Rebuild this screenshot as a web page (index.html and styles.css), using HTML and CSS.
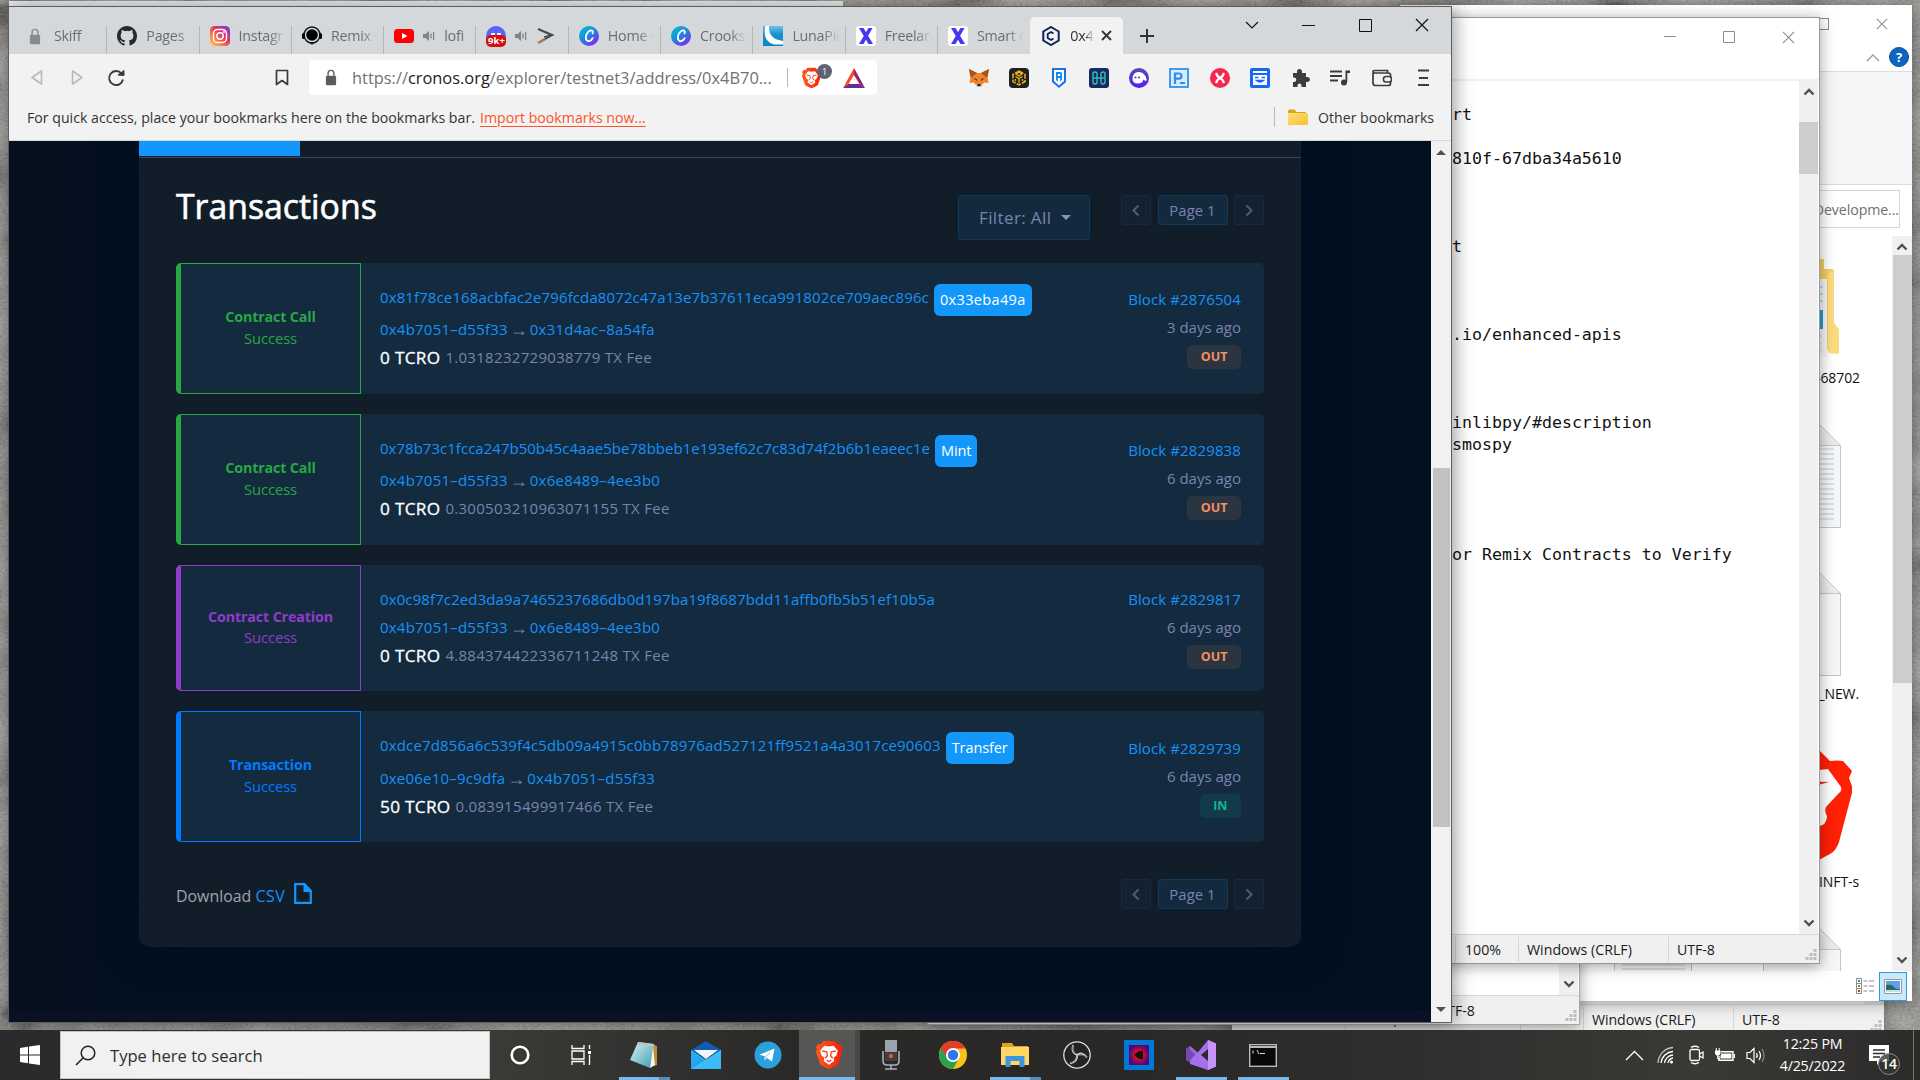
FILE: index.html
```html
<!DOCTYPE html>
<html lang="en">
<head>
<meta charset="utf-8">
<title>Desktop</title>
<link rel="stylesheet" href="styles.css">
</head>
<body>
<svg class="defs" width="0" height="0">
  <defs>
    <linearGradient id="g-insta" x1="0" y1="1" x2="1" y2="0"><stop offset="0" stop-color="#fd5"/><stop offset=".3" stop-color="#ff7a3c"/><stop offset=".6" stop-color="#e1306c"/><stop offset="1" stop-color="#6a3be0"/></linearGradient>
    <linearGradient id="g-canva" x1="0" y1="0" x2=".7" y2="1"><stop offset="0" stop-color="#00c4cc"/><stop offset=".5" stop-color="#1a8fe0"/><stop offset="1" stop-color="#7d2ae8"/></linearGradient>
    <linearGradient id="g-luna" x1="0" y1="0" x2="0" y2="1"><stop offset="0" stop-color="#6cc3e8"/><stop offset=".4" stop-color="#1c93cc"/><stop offset="1" stop-color="#0a86c4"/></linearGradient>
    <linearGradient id="g-brave" x1="0" y1="0" x2="1" y2="0"><stop offset="0" stop-color="#ff5a1f"/><stop offset="1" stop-color="#fb1e08"/></linearGradient>
    <linearGradient id="g-folder" x1="0" y1="0" x2="1" y2="1"><stop offset="0" stop-color="#ffe07a"/><stop offset="1" stop-color="#f6c02e"/></linearGradient>
    <linearGradient id="g-mail" x1="0" y1="0" x2="1" y2="1"><stop offset="0" stop-color="#2ab4f4"/><stop offset="1" stop-color="#1a8fe8"/></linearGradient>
    <linearGradient id="g-np" x1="0" y1="0" x2="1" y2="1"><stop offset="0" stop-color="#d8f3f6"/><stop offset="1" stop-color="#3f9db0"/></linearGradient>
    <radialGradient id="g-red"><stop offset="0" stop-color="#ff2a10"/><stop offset=".55" stop-color="#c00838"/><stop offset="1" stop-color="#4c0a78"/></radialGradient>
    <linearGradient id="g-phantom" x1="0" y1="0" x2="0" y2="1"><stop offset="0" stop-color="#534bb1"/><stop offset="1" stop-color="#551bf9"/></linearGradient>
    <linearGradient id="g-fold" x1="0" y1="1" x2="1" y2="0"><stop offset="0" stop-color="#e4e4e4"/><stop offset="1" stop-color="#fafafa"/></linearGradient>
    <filter id="stone" x="0" y="0" width="100%" height="100%"><feTurbulence type="fractalNoise" baseFrequency=".35 .5" numOctaves="3" seed="4"/><feColorMatrix values=".9 0 0 0 0  .9 0 0 0 0  .9 0 0 0 0  0 0 0 0 1"/></filter>
    <filter id="stone-big" x="0" y="0" width="100%" height="100%"><feTurbulence type="fractalNoise" baseFrequency=".012 .02" numOctaves="3" seed="9"/><feColorMatrix values="2 0 0 0 -.5  2 0 0 0 -.5  2 0 0 0 -.5  0 0 0 0 1"/></filter>
    <symbol id="lock" viewBox="0 0 14 20"><rect x="1" y="8" width="12" height="11" rx="1.5" fill="currentColor"/><path d="M3.6 8V5a3.4 3.4 0 0 1 6.8 0v3" fill="none" stroke="currentColor" stroke-width="1.7"/></symbol>
    <symbol id="sound" viewBox="0 0 14 14"><path d="M1 5h2.6L7 2v10L3.6 9H1z" fill="currentColor"/><path d="M9 4.5v5M11.6 3v8" stroke="currentColor" stroke-width="1.3"/></symbol>
    <symbol id="canva" viewBox="0 0 20 20"><circle cx="10" cy="10" r="10" fill="url(#g-canva)"/><path d="M13.6 7.400c1-3-1.700-3.800-3.800-2C6.900 7.700 6 12 7.700 14.300c1.500 1.900 4.500.6 6-2.200" fill="none" stroke="#fff" stroke-width="1.800" stroke-linecap="round"/></symbol>
    <symbol id="xicon" viewBox="0 0 20 20"><rect width="20" height="20" rx="3" fill="#fff"/><path d="M3 2h4.500L17 18h-4.500zM12.500 2h4L7.500 18h-4.500z" fill="#4338f0"/></symbol>
    <symbol id="lion" viewBox="0 0 28 30"><path d="M8 0h12l3 3.500 2.500-.5L28 6.500l-1 2 1 3.500-4.500 13q-1 2-9.500 5-8.500-3-9.500-5L0 12l1-3.500-1-2L2.500 3 5 3.500z" fill="url(#g-brave)"/><path d="M9 5l5 .8 5-.8 4.500 5.500-1.500 5-3 2.500.7 3.500-5.700 4-5.700-4L9 18l-3-2.500-1.500-5z" fill="#fff"/><path d="M6.500 10.500l5 1 .8 4-2.300 3M21.500 10.500l-5 1-.8 4 2.300 3M11.500 20.500l2.500 1.500 2.500-1.500" fill="none" stroke="#fb3a14" stroke-width="1.400"/></symbol>
    <symbol id="chev" viewBox="0 0 12 12"><path d="M1.500 3.500L6 8l4.500-4.500" fill="none" stroke="currentColor" stroke-width="2.400"/></symbol>
    <symbol id="close" viewBox="0 0 14 14"><path d="M1 1l12 12M13 1L1 13" stroke="currentColor" stroke-width="1.200"/></symbol>
    <symbol id="doc" viewBox="0 0 78 105"><path d="M.5.500h55l22 22v82H.5z" fill="#f5f6f8" stroke="#c3c5c8"/><path d="M55.500.500v22h22z" fill="url(#g-fold)" stroke="#c3c5c8"/></symbol>
    <symbol id="grip" viewBox="0 0 12 12"><path d="M8.500 0h3v3h-3zM4.500 4h3v3h-3zM8.500 4h3v3h-3zM.5 8h3v3h-3zM4.500 8h3v3h-3zM8.500 8h3v3h-3z" fill="#bdbdbd"/></symbol>
  </defs>
</svg>

<main class="desktop">
  <svg class="wallpaper" width="1920" height="1080"><rect width="1920" height="1080" filter="url(#stone-big)" opacity=".35"/><rect width="1920" height="1080" filter="url(#stone)" opacity=".28"/></svg>

  <!-- Rearmost notepad -->
  <section class="window np-back">
    <div class="np-back-top"></div>
    <div class="status">
      <span class="cell c1">Ln 47, Col 1</span><span class="cell c2">100%</span><span class="cell c3">Windows (CRLF)</span><span class="cell c4">UTF-8</span>
      <svg class="grip"><use href="#grip"/></svg>
    </div>
  </section>

  <!-- File explorer -->
  <section class="window explorer">
    <header class="ex-title">
      <span class="ctl-box"></span>
      <svg class="ctl-x" viewBox="0 0 14 14"><use href="#close"/></svg>
    </header>
    <div class="ex-tabs">
      <svg width="14" height="9" viewBox="0 0 14 9"><path d="M1 8l6-6 6 6" fill="none" stroke="#9a9a9a" stroke-width="1.300"/></svg>
      <span class="help">?</span>
    </div>
    <div class="ex-ribbon"></div>
    <div class="ex-search"><span>Search Developme...</span></div>
    <div class="ex-body">
      <div class="ex-files">
        <svg class="f-folder" width="60" height="98" viewBox="0 0 60 98"><path d="M0 0h16v10h8q2 0 2 3v78H0z" fill="#f3cf66"/><path d="M0 20h19v78l-19-3z" fill="#f4f6f8"/><path d="M2 28h13M2 35h13M2 42h13" stroke="#7dc0e6"/><path d="M0 51h15v19H0z" fill="#2f94cf"/><path d="M2 77h12M2 84h12M2 91h12" stroke="#cfd4d8"/><path d="M20 14l6-2v52l5 6v25l-11-1z" fill="#fddc80"/></svg>
        <span class="f-name n1">1650468702</span>
        <svg class="f-doc d1" width="78" height="105"><use href="#doc"/><path d="M8 26h63M8 31h63M8 36h63M8 41h63M8 46h63M8 51h63M8 56h63M8 61h63M8 66h63M8 71h63M8 76h63M8 81h63M8 86h63M8 91h63M8 96h63" stroke="#c2c5c8"/></svg>
        <svg class="f-doc d2" width="78" height="105"><use href="#doc"/></svg>
        <span class="f-name n2">README_NEW.</span>
        <svg class="f-brave" width="100" height="110" viewBox="0 0 100 110"><path d="M50 0h17l11 11q8-1 13 0l9 10-3 7 4 11-14 53q-3 9-9 12l-13 7H40z" fill="#ff2104"/><path d="M50 22l26-3 13 18q1 4-2 6L74 57q-2 4 1 9 0 10-10 10H50z" fill="#fff"/><path d="M50 31l27 1-22 6z" fill="#ff2104"/></svg>
        <span class="f-name n3">INFT-s</span>
        <svg class="f-doc d3" width="78" height="105"><use href="#doc"/></svg>
        <svg class="f-doc d4" width="78" height="105"><use href="#doc"/><path d="M8 38h63M8 42h63" stroke="#c2c5c8"/></svg>
      </div>
      <div class="ex-scroll">
        <svg width="12" height="12" class="up"><use href="#chev"/></svg>
        <div class="ex-thumb"></div>
        <svg width="12" height="12"><use href="#chev"/></svg>
      </div>
    </div>
    <footer class="ex-foot">
      <svg width="18" height="17" viewBox="0 0 18 17"><path d="M.5.500h5v5h-5zM.5 5.500h5v5h-5zM.5 10.500h5v5h-5z" fill="#fff" stroke="#8d8d8d"/><path d="M7.500 3h4M13 3h5M7.500 8h4M13 8h5M7.500 13h4M13 13h5" stroke="#8d8d8d"/><path d="M2 2h2v2H2z" fill="#3a8f8a"/><path d="M2 7h2v2H2z" fill="#a0803a"/><path d="M2 12h2v2H2z" fill="#c0391a"/></svg>
      <span class="view-sel"><svg width="18" height="15" viewBox="0 0 18 15"><path d="M.5.500h17v14H.5z" fill="#fff" stroke="#8d9aa3"/><path d="M2 2h14v11H2z" fill="#5f9ee8"/><path d="M2 6q6-1 8 2t6 2v3H2z" fill="#2f6b50"/><path d="M2 11h14v2H2z" fill="#bfe0f4"/></svg></span>
    </footer>
  </section>

  <!-- Middle notepad -->
  <section class="window np-mid">
    <div class="np-mid-body"><div class="track"><svg width="12" height="12"><use href="#chev"/></svg></div></div>
    <div class="status">
      <span class="enc">UTF-8</span>
      <svg class="grip"><use href="#grip"/></svg>
    </div>
  </section>

  <!-- Front notepad -->
  <section class="window np-front">
    <header class="np-title">
      <svg width="12" height="12"><path d="M0 5.500h12" stroke="#8c8c8c"/></svg>
      <svg width="12" height="12"><path d="M.5.500h11v11H.5z" fill="none" stroke="#8c8c8c"/></svg>
      <svg width="13" height="13" class="grey" viewBox="0 0 14 14"><use href="#close"/></svg>
    </header>
    <div class="np-main">
      <pre class="np-text">rt

810f-67dba34a5610



t



.io/enhanced-apis



inlibpy/#description
smospy




or Remix Contracts to Verify</pre>
      <div class="np-scroll">
        <svg width="12" height="12" class="up"><use href="#chev"/></svg>
        <div class="np-thumb"></div>
        <svg width="12" height="12"><use href="#chev"/></svg>
      </div>
    </div>
    <div class="status">
      <span class="cell c2">100%</span><span class="cell c3">Windows (CRLF)</span><span class="cell c4">UTF-8</span>
      <svg class="grip"><use href="#grip"/></svg>
    </div>
  </section>

  <div class="sliver"></div>

  <!-- Browser -->
  <section class="window browser">
    <header class="tabstrip">
      <div class="tab"><svg class="fav dim" viewBox="0 0 20 20"><use href="#lock" x="4" y="2" width="12" height="17"/></svg><span class="t">Skiff</span></div>
      <div class="tab"><svg class="fav" viewBox="0 0 16 16"><path fill="#24292f" d="M8 0C3.580 0 0 3.580 0 8c0 3.540 2.290 6.530 5.470 7.590.4.070.55-.17.55-.38v-1.490c-2.010.37-2.530-.49-2.690-.94-.09-.23-.48-.94-.82-1.130-.28-.15-.68-.52-.01-.53.63-.01 1.080.58 1.230.82.72 1.210 1.870.87 2.330.66.07-.52.28-.87.51-1.070-1.780-.2-3.640-.89-3.640-3.950 0-.87.31-1.590.82-2.150-.08-.2-.36-1.020.08-2.120 0 0 .67-.21 2.200.82a7.400 7.400 0 0 1 4 0c1.530-1.040 2.200-.82 2.200-.82.44 1.100.16 1.920.08 2.120.51.56.82 1.270.82 2.150 0 3.070-1.870 3.750-3.650 3.950.29.25.54.73.54 1.480v2.190c0 .21.15.46.55.38A8.010 8.010 0 0 0 16 8c0-4.420-3.580-8-8-8z"/></svg><span class="t">Pages</span></div>
      <div class="tab"><svg class="fav" viewBox="0 0 20 20"><rect width="20" height="20" rx="4.500" fill="url(#g-insta)"/><rect x="3.500" y="3.500" width="13" height="13" rx="4" fill="none" stroke="#fff" stroke-width="1.500"/><circle cx="10" cy="10" r="3.200" fill="none" stroke="#fff" stroke-width="1.500"/><circle cx="14" cy="6" r="1" fill="#fff"/></svg><span class="t">Instagr</span></div>
      <div class="tab"><svg class="fav" viewBox="0 0 20 20"><circle cx="10" cy="9" r="8" fill="none" stroke="#111" stroke-width="1.500"/><circle cx="10" cy="9" r="5.800" fill="#000"/><rect x="0" y="7" width="3" height="6" rx="1.500"/><rect x="17" y="7" width="3" height="6" rx="1.500"/><path d="M7.500 16h5L10 19z"/></svg><span class="t">Remix -</span></div>
      <div class="tab"><svg class="fav" viewBox="0 0 20 20"><rect y="3" width="20" height="14" rx="3.500" fill="#f00"/><path d="M8 7l5.500 3L8 13z" fill="#fff"/></svg><svg class="snd"><use href="#sound"/></svg><span class="t plain">lofi</span></div>
      <div class="tab"><span class="fav discord"><i></i><b>9k+</b></span><svg class="snd"><use href="#sound"/></svg><svg class="dart" width="18" height="16" viewBox="0 0 18 16"><path d="M2 1l14 6L4 14" fill="none" stroke="#49474a" stroke-width="2"/><path d="M9 4l7 3-8 2" fill="none" stroke="#49474a" stroke-width="1.500"/><path d="M2 15l7-4" stroke="#a77a5c" stroke-width="2.500"/></svg></div>
      <div class="tab"><svg class="fav"><use href="#canva"/></svg><span class="t">Home -</span></div>
      <div class="tab"><svg class="fav"><use href="#canva"/></svg><span class="t">Crooks</span></div>
      <div class="tab"><svg class="fav" viewBox="0 0 20 20"><rect width="20" height="20" fill="url(#g-luna)"/><path d="M6 0q-1 13 14 15v3.500H11Q-1 15 2.500 0z" fill="#fff"/></svg><span class="t">LunaPic</span></div>
      <div class="tab"><svg class="fav"><use href="#xicon"/></svg><span class="t">Freelan</span></div>
      <div class="tab last"><svg class="fav"><use href="#xicon"/></svg><span class="t">Smart c</span></div>
      <div class="tab active"><svg class="fav" viewBox="0 0 20 20"><path d="M10 1l7.700 4.500v9L10 19l-7.700-4.500v-9z" fill="none" stroke="#0b2457" stroke-width="2"/><path d="M12.500 7.500L10 6 6.700 8v4l3.300 2 2.500-1.500" fill="none" stroke="#0b2457" stroke-width="1.800"/></svg><span class="t">0x4</span><svg class="tx" width="11" height="11" viewBox="0 0 11 11"><path d="M1 1l9 9M10 1l-9 9" stroke="#333" stroke-width="1.900"/></svg></div>
      <svg class="plus" width="16" height="16"><path d="M8 1v14M1 8h14" stroke="#333" stroke-width="2"/></svg>
      <div class="winctl">
        <svg width="14" height="8"><path d="M1 1l6 6 6-6" fill="none" stroke="#111" stroke-width="1.200"/></svg>
        <svg width="13" height="13"><path d="M0 6.500h13" stroke="#111"/></svg>
        <svg width="13" height="13"><path d="M.5.500h12v12H.5z" fill="none" stroke="#111"/></svg>
        <svg width="14" height="14" viewBox="0 0 14 14"><use href="#close"/></svg>
      </div>
    </header>

    <nav class="toolbar">
      <svg class="nav-b" width="13" height="17"><path d="M11.500 2v13L2 8.500z" fill="none" stroke="#b9b9b9" stroke-width="1.600" stroke-linejoin="round"/></svg>
      <svg class="nav-f" width="13" height="17"><path d="M1.500 2v13L11 8.500z" fill="none" stroke="#b9b9b9" stroke-width="1.600" stroke-linejoin="round"/></svg>
      <svg class="nav-r" width="18" height="18"><path d="M14.500 4.500A7 7 0 1 0 16 10.500" fill="none" stroke="#3a3a3a" stroke-width="1.900"/><path d="M11 6l6 .5V1.500z" fill="#3a3a3a" stroke="#3a3a3a"/></svg>
      <svg class="nav-m" width="14" height="17"><path d="M1.500 1.500h11v14L7 11.500l-5.500 4z" fill="none" stroke="#3a3a3a" stroke-width="1.700" stroke-linejoin="round"/></svg>
      <div class="urlbox">
        <svg class="ulock" width="12" height="17"><use href="#lock"/></svg>
        <span class="url">https://<b>cronos.org</b>/explorer/testnet3/address/0x4B70...</span>
        <span class="usep"></span>
        <span class="shield"><svg width="19" height="22"><use href="#lion"/></svg><em>1</em></span>
        <svg width="22" height="20" viewBox="0 0 22 20"><path d="M11 0L0 20l5.500-4L11 7z" fill="#ff4724"/><path d="M11 0l11 20-5.500-4L11 7z" fill="#9e1f63"/><path d="M0 20h22l-5.500-4h-11z" fill="#662d91"/></svg>
      </div>
      <div class="exts">
        <svg viewBox="0 0 20 20"><path d="M0 1l8 4h4l8-4-1.500 8 1 6-4.500-.5-3 4h-4l-3-4-4.500.5 1-6z" fill="#f0832a"/><path d="M0 1l8 4-5 4-1.500 0zM20 1l-8 4 5 4 1.500 0z" fill="#a8521e"/><path d="M4 10l4 1v2zM16 10l-4 1v2z" fill="#3b3b46"/><path d="M7 16h6l-1 3H8z" fill="#c9c0bb"/><path d="M8.500 16h3v2h-3z" fill="#222"/></svg>
        <svg viewBox="0 0 20 20"><rect width="20" height="20" rx="4" fill="#1e2026"/><path d="M10 3l6 3.500v7L10 17l-6-3.500v-7z" fill="none" stroke="#f0b90b" stroke-width="1.500" stroke-dasharray="5 1.200"/><path d="M6.500 8.500L10 10.500l3.500-2M10 10.500V15M7 6l3-1.700L13 6l-3 2zM6.500 11v2M13.500 11v2" stroke="#f0b90b" stroke-width="1.300" fill="none"/></svg>
        <svg viewBox="0 0 20 20"><path d="M3 0h14v14l-7 6-7-6z" fill="#1273ea"/><path d="M5 2h10v11l-5 4.500L5 13z" fill="#fff"/><path d="M7 4h4.500q1.500 0 1.500 1.500v6L11.200 14V10H8.800v4L7 12z" fill="#1287f5"/><path d="M8.800 6h2.400v2H8.800z" fill="#fff"/></svg>
        <svg viewBox="0 0 20 20"><rect width="20" height="20" rx="3" fill="#1b295e"/><g fill="none" stroke="#2fc9c0" stroke-width="1.300"><rect x="4" y="4" width="4" height="12" rx="2"/><rect x="12" y="4" width="4" height="12" rx="2"/><path d="M4 10h12"/></g></svg>
        <svg viewBox="0 0 20 20"><circle cx="10" cy="10" r="10" fill="url(#g-phantom)"/><path d="M3.500 10.500q0-6 6-6.500 7 0 8.300 8.500-3 .5-3.500-1 0 4-6 4-4.800 0-4.800-5z" fill="#fff"/><circle cx="6.500" cy="9.500" r="1.100" fill="#534bb1"/><circle cx="10" cy="9.500" r="1.100" fill="#534bb1"/></svg>
        <svg viewBox="0 0 20 20"><rect x="1" y="1" width="18" height="18" fill="#dcecff" stroke="#3a9cf5" stroke-width="2"/><path d="M6 16V5.500h4q2.500 0 2.500 2.500T10 10.700H6" fill="none" stroke="#2f8df0" stroke-width="2.200"/><path d="M11 15h5" stroke="#2f8df0" stroke-width="2"/></svg>
        <svg viewBox="0 0 20 20"><circle cx="10" cy="10" r="10" fill="#f5274f"/><path d="M6 5q1.500 4 4 5t4 5M14 5q-1.500 4-4 5t-4 5" stroke="#fff" stroke-width="2.200" fill="none"/></svg>
        <svg viewBox="0 0 20 20"><rect width="20" height="20" rx="2" fill="#1769f5"/><path d="M3 3h14v2H3zM3 7h14v10H3z" fill="#fff"/><path d="M5 9.500h3.500M11.500 9.500H15M6.500 12.500q3.500 3 7 0z" stroke="#1769f5" stroke-width="1.400" fill="none"/></svg>
        <svg viewBox="0 0 20 20"><path d="M3 5h4V3.500a2.500 2.500 0 0 1 5 0V5h4v4h1.500a2.500 2.500 0 0 1 0 5H16v5h-4.500v-1.500a2 2 0 0 0-4 0V19H3v-5h1a2.300 2.300 0 0 0 0-4.600H3z" fill="#3c3c3c"/></svg>
        <svg viewBox="0 0 20 20"><path d="M0 3.500h12M0 8h12M0 12.500h8" stroke="#3c3c3c" stroke-width="1.800"/><path d="M15.500 14V2.500H20v2.500h-2.700V14z" fill="#3c3c3c"/><circle cx="14" cy="14.500" r="3" fill="#3c3c3c"/></svg>
        <svg viewBox="0 0 20 20"><path d="M1 5v10q0 2.500 2.500 2.500h13q2 0 2-2V7q0-2-2-2H3Q1 5 1 3.700T3 2.500h12.500V5" fill="none" stroke="#3c3c3c" stroke-width="1.700"/><rect x="11.500" y="8.500" width="8" height="5.500" rx="2.500" fill="#f2f2f2" stroke="#3c3c3c" stroke-width="1.600"/></svg>
        <svg viewBox="0 0 20 20"><path d="M4 2.500h11M5 10h9M4 17h11" stroke="#3c3c3c" stroke-width="1.900"/></svg>
      </div>
    </nav>

    <div class="bookmarks">
      <span class="bm-text">For quick access, place your bookmarks here on the bookmarks bar.</span>
      <a class="bm-link">Import bookmarks now...</a>
      <span class="bm-sep"></span>
      <svg width="20" height="17" viewBox="0 0 20 17"><path d="M0 2q0-1.500 1.500-1.500h5L8.500 3H18v13H0z" fill="#dba520"/><path d="M0 4h18.500q1.500 0 1.500 1.500v9q0 1.500-1.500 1.500h-17Q0 16 0 14.500z" fill="url(#g-folder)"/></svg>
      <span class="bm-other">Other bookmarks</span>
    </div>

    <div class="viewport">
      <div class="page">
        <article class="panel">
          <div class="panel-tabs"><span class="panel-tab"></span></div>
          <header class="tx-head">
            <h1>Transactions</h1>
            <div class="filter">Filter: All <i></i></div>
            <div class="pager"><span class="pg off"><svg width="8" height="13"><path d="M6.500 1.500l-5 5 5 5" fill="none" stroke="#525d68" stroke-width="2"/></svg></span><span class="pg cur">Page 1</span><span class="pg off"><svg width="8" height="13"><path d="M1.500 1.500l5 5-5 5" fill="none" stroke="#525d68" stroke-width="2"/></svg></span></div>
          </header>

          <div class="card call">
            <div class="kind"><b>Contract Call</b><span>Success</span></div>
            <div class="info">
              <p class="l1"><a class="loose">0x81f78ce168acbfac2e796fcda8072c47a13e7b37611eca991802ce709aec896c</a><mark class="raw">0x33eba49a</mark></p>
              <p class="route"><a>0x4b7051–d55f33</a><i class="arr">→</i><a>0x31d4ac–8a54fa</a></p>
              <p><strong>0 TCRO</strong><span>1.0318232729038779 TX Fee</span></p>
            </div>
            <div class="meta"><a>Block #2876504</a><span>3 days ago</span><em class="out">OUT</em></div>
          </div>
          <div class="card call">
            <div class="kind"><b>Contract Call</b><span>Success</span></div>
            <div class="info">
              <p class="l1"><a>0x78b73c1fcca247b50b45c4aae5be78bbeb1e193ef62c7c83d74f2b6b1eaeec1e</a><mark>Mint</mark></p>
              <p class="route"><a>0x4b7051–d55f33</a><i class="arr">→</i><a>0x6e8489–4ee3b0</a></p>
              <p><strong>0 TCRO</strong><span>0.300503210963071155 TX Fee</span></p>
            </div>
            <div class="meta"><a>Block #2829838</a><span>6 days ago</span><em class="out">OUT</em></div>
          </div>
          <div class="card creation">
            <div class="kind"><b>Contract Creation</b><span>Success</span></div>
            <div class="info">
              <p class="l1"><a class="loose">0x0c98f7c2ed3da9a7465237686db0d197ba19f8687bdd11affb0fb5b51ef10b5a</a></p>
              <p class="route"><a>0x4b7051–d55f33</a><i class="arr">→</i><a>0x6e8489–4ee3b0</a></p>
              <p><strong>0 TCRO</strong><span>4.884374422336711248 TX Fee</span></p>
            </div>
            <div class="meta"><a>Block #2829817</a><span>6 days ago</span><em class="out">OUT</em></div>
          </div>
          <div class="card transfer">
            <div class="kind"><b>Transaction</b><span>Success</span></div>
            <div class="info">
              <p class="l1"><a class="looser">0xdce7d856a6c539f4c5db09a4915c0bb78976ad527121ff9521a4a3017ce90603</a><mark>Transfer</mark></p>
              <p class="route"><a>0xe06e10–9c9dfa</a><i class="arr">→</i><a>0x4b7051–d55f33</a></p>
              <p><strong>50 TCRO</strong><span>0.083915499917466 TX Fee</span></p>
            </div>
            <div class="meta"><a>Block #2829739</a><span>6 days ago</span><em class="in">IN</em></div>
          </div>

          <footer class="tx-foot">
            <span class="dl">Download <a>CSV</a></span>
            <svg class="csv" width="18" height="21"><path d="M1.200 1.200h9.300L16.800 8v11.800H1.200z" fill="none" stroke="#1397fb" stroke-width="2.200"/><path d="M9.500 1h1.500l6.500 7v1h-8z" fill="#1397fb"/></svg>
            <div class="pager"><span class="pg off"><svg width="8" height="13"><path d="M6.500 1.500l-5 5 5 5" fill="none" stroke="#525d68" stroke-width="2"/></svg></span><span class="pg cur">Page 1</span><span class="pg off"><svg width="8" height="13"><path d="M1.500 1.500l5 5-5 5" fill="none" stroke="#525d68" stroke-width="2"/></svg></span></div>
          </footer>
        </article>
        <div class="page-end"></div>
      </div>
      <div class="vscroll"><i class="tri-up"></i><div class="vthumb"></div><i class="tri-down"></i></div>
    </div>
  </section>

  <!-- Taskbar -->
  <footer class="taskbar">
    <div class="start"><svg width="20" height="20" viewBox="0 0 20 20"><path d="M0 3l8-1.200V9.500H0zM9 1.600L20 0v9.500H9zM0 10.500h8v7.700L0 17zM9 10.500h11V20L9 18.400z" fill="#fff"/></svg></div>
    <div class="search"><svg width="21" height="21"><circle cx="13" cy="8" r="6.800" fill="none" stroke="#222" stroke-width="1.500"/><path d="M8 13L1 20" stroke="#222" stroke-width="1.600"/></svg><span>Type here to search</span></div>
    <div class="apps">
      <div class="app"><svg width="20" height="20"><circle cx="10" cy="10" r="8.300" fill="none" stroke="#fff" stroke-width="2.600"/></svg></div>
      <div class="app"><svg width="21" height="20" viewBox="0 0 21 20"><g fill="none" stroke="#fff" stroke-width="1.300"><path d="M1 0v3.500h12V0M1 20v-3.500h12V20M1 6h12v8H1zM18.500 0v4M18.500 10v10"/></g><rect x="17" y="6" width="3" height="3" fill="#fff"/></svg></div>
      <div class="app run more"><svg width="30" height="30" viewBox="0 0 30 30"><path d="M23 4l5 2v19l-7 2z" fill="#c58a34"/><path d="M9 2l16 2-4 24L1 20z" fill="url(#g-np)"/><path d="M9 2l16 2-.6 2.500L8 5z" fill="#bfc4c7"/><path d="M24 7l2 18-5 3z" fill="#f2f4f4"/></svg></div>
      <div class="app"><svg width="30" height="28" viewBox="0 0 30 28"><path d="M0 9L15 0l15 9v5H0z" fill="#0f5cb0"/><path d="M3 9h24l-12 9z" fill="#f2f5f8"/><path d="M0 9l15 9.500L30 9v19H0z" fill="url(#g-mail)"/><path d="M0 28L30 9v19z" fill="#45c6fb" opacity=".75"/></svg></div>
      <div class="app"><svg width="28" height="28" viewBox="0 0 28 28"><circle cx="14" cy="14" r="13.500" fill="#2ba0da"/><path d="M5.500 13.700L20.500 7.500l-2.500 13-5-3.500-2.500 2.300.3-4z" fill="#fff"/><path d="M10.800 15l7-5-5.300 6.500-1.800 2.500z" fill="#bcdff0"/></svg></div>
      <div class="app act"><svg width="26" height="30"><use href="#lion"/></svg></div>
      <div class="app"><svg width="18" height="30" viewBox="0 0 18 30"><path d="M3 0h12v20H3z" fill="#9aa3ad"/><path d="M3 12h12v9H3z" fill="#3b4048"/><path d="M1 11v10q0 4 4 4h8q4 0 4-4V11" fill="none" stroke="#a7b0ba" stroke-width="1.600"/><path d="M9 25v4M3 29h12" stroke="#a7b0ba" stroke-width="1.600"/><circle cx="9" cy="16" r="2.200" fill="#e8561a"/></svg></div>
      <div class="app"><svg width="28" height="28" viewBox="0 0 28 28"><circle cx="14" cy="14" r="14" fill="#fbc116"/><path d="M14 14L1.900 7A14 14 0 0 0 14 28l6-10.500z" fill="#2ba24c"/><path d="M14 14V7.500h12.400A14 14 0 0 0 1.900 7l6.400 10.500z" fill="#e33b2e"/><circle cx="14" cy="14" r="7" fill="#fff"/><circle cx="14" cy="14" r="5.200" fill="#2f76ea"/></svg></div>
      <div class="app run more"><svg width="28" height="24" viewBox="0 0 28 24"><path d="M1 0h10l2 3h14v4H1z" fill="#e2a21a"/><path d="M0 4h28v18H0z" fill="#ffd766"/><path d="M4.500 24V13h19v11h-5v-6h-9v6z" fill="#3b96de"/></svg></div>
      <div class="app"><svg width="28" height="28" viewBox="0 0 28 28"><circle cx="14" cy="14" r="13.200" fill="#222327" stroke="#dcdcdc" stroke-width="1.300"/><path d="M14 14q-6-2-4-10M14 14q5-4 10 2.500M14 14q1 7-7 8.500" fill="none" stroke="#cfcfcf" stroke-width="1.800"/><path d="M10 4.500q-1 5 2 8M23.500 16q-4-3-8-1.500M7.500 22q5-2 5.500-6" fill="none" stroke="#777" stroke-width="1.200"/></svg></div>
      <div class="app"><svg width="30" height="30" viewBox="0 0 30 30"><rect width="30" height="30" fill="#0078d7"/><rect x="5" y="5" width="20" height="20" fill="url(#g-red)"/><path d="M10 15l5-4h4v8h-4z" fill="#111"/></svg></div>
      <div class="app run"><svg width="30" height="30" viewBox="0 0 30 30"><path d="M0 9l4-3 18 15V30L2 21q-2-1-2-3z" fill="#9a6ad8"/><path d="M0 9l4-3v4l5 4.500L4 20v2.500L0 20z" fill="#7747b8"/><path d="M22 0l8 3.500v23L22 30 4 24v-2z" fill="#a670e8"/><path d="M22 0l8 3.500v23L22 30z" fill="#c893f8"/><path d="M22 9v12l-7-6z" fill="#2a2a2a"/></svg></div>
      <div class="app run"><svg width="28" height="23" viewBox="0 0 28 23"><rect x=".7" y=".7" width="26.600" height="21.600" fill="#080808" stroke="#b5b9bd" stroke-width="1.400"/><path d="M1 3h26" stroke="#b5b9bd" stroke-width="2"/><path d="M4 6.500v3M6 7.500v.1M6 9.500v.1M8 6l2 4M11 9.500h5" stroke="#ddd"/></svg></div>
    </div>
    <div class="tray">
      <svg width="19" height="11"><path d="M1 10l8.500-8.500L18 10" fill="none" stroke="#fff" stroke-width="1.300"/></svg>
      <svg width="17" height="18" viewBox="0 0 17 18"><g fill="none" stroke="#fff" stroke-width="1.300"><path d="M1 17A16 16 0 0 1 16 1.500" opacity=".7"/><path d="M4 17A13 13 0 0 1 16 5.500"/><path d="M7.500 17A9.500 9.500 0 0 1 16 9"/><path d="M11 17a6 6 0 0 1 5-5"/></g><circle cx="14.500" cy="16" r="1.500" fill="#fff"/></svg>
      <svg width="15" height="20" viewBox="0 0 15 20"><g fill="none" stroke="#fff" stroke-width="1.300"><rect x="1" y="4.500" width="9.500" height="11" rx="1.500"/><path d="M10.500 9l3.500-2v6l-3.500-2M2 2.500q4-2.500 8 0M2 17.500q4 2.500 8 0"/></g></svg>
      <svg width="20" height="14" viewBox="0 0 20 14"><path d="M6 3.700h12v8.600H4V8" fill="none" stroke="#fff" stroke-width="1.400"/><path d="M6.500 5.500h10v5h-11V8zM18.500 6H20v4h-1.500zM0 2.500h5.500V6L4 7.500H1.500L0 6z" fill="#fff"/><path d="M1.300 0v3M4.200 0v3M2.700 7v4h2" stroke="#fff" fill="none"/></svg>
      <svg width="20" height="17" viewBox="0 0 20 17"><path d="M1 5.500h3l4-4v14l-4-4H1z" fill="none" stroke="#fff" stroke-width="1.200"/><path d="M10.500 6q1.500 2.500 0 5M13 4q3 4.500 0 9" fill="none" stroke="#fff" stroke-width="1.200"/><path d="M16 2q4 6.500 0 13" fill="none" stroke="#888" stroke-width="1.200"/></svg>
    </div>
    <div class="clock"><span class="ck-t">12:25 PM</span><span class="ck-d">4/25/2022</span></div>
    <div class="notif"><svg width="21" height="21"><path d="M0 0h20v16h-8l-4 4v-4H0z" fill="#fff"/><path d="M4 5h12M4 8.500h12M4 12h7" stroke="#2b2b2b" stroke-width="1.400"/></svg><span>14</span></div>
  </footer>
</main>
</body>
</html>
```
FILE: styles.css
```css
* { box-sizing: border-box; }
body { margin: 0; font-family: "Open Sans", "Noto Sans", sans-serif; font-size: 14px; color: #222; overflow: hidden; }
svg { display: block; flex: none; }
p, h1, pre { margin: 0; }
em, i { font-style: normal; }
.defs { position: absolute; }

.desktop {
  position: relative; width: 1920px; height: 1080px; overflow: hidden;
  background: #77756f;
}
.wallpaper { position: absolute; left: 0; top: 0; }
.window { position: absolute; background: #fff; box-shadow: 0 2px 14px rgba(0,0,0,.38); }
.up { transform: rotate(180deg); }

/* Notepad status bars */
.status { display: flex; align-items: center; background: #f0f0f0; border-top: 1px solid #d7d7d7; font-size: 14.2px; letter-spacing: -.1px; color: #1b1b1b; position: relative; }
.cell { border-left: 1px solid #d7d7d7; padding-left: 8px; height: 25px; line-height: 25px; flex: none; white-space: nowrap; }
.grip { position: absolute; right: 2px; bottom: 2px; width: 12px; height: 12px; }

.np-back { left: 1232px; top: 980px; width: 652px; height: 54px; display: flex; flex-direction: column; background: #f0f0f0; }
.np-back-top { height: 24px; background: linear-gradient(90deg, #f4f4f4 632px, #e2e2e2 632px); }
.np-back .status { height: 30px; padding-left: 113px; }
.np-back .c1 { width: 175px; padding-left: 12px; }
.np-back .c2 { width: 63px; }
.np-back .c3 { width: 150px; }

.np-mid { left: 927px; top: 900px; width: 653px; height: 125px; display: flex; flex-direction: column; border: 1px solid #a6a6a6; }
.np-mid-body { flex: 1; display: flex; justify-content: flex-end; }
.np-mid .track { width: 19px; margin-right: 1px; background: #f0f0f0; display: flex; justify-content: center; align-items: flex-end; padding-bottom: 5px; color: #505050; }
.np-mid .status { height: 29px; }
.np-mid .enc { margin-left: 509px; }

/* Explorer */
.explorer { left: 1400px; top: 5px; width: 512px; height: 996px; display: flex; flex-direction: column; }
.ex-title { height: 38px; display: flex; justify-content: flex-end; align-items: center; padding-right: 24px; gap: 47px; color: #8c8c8c; }
.ctl-box { width: 12px; height: 12px; border: 1px solid #8c8c8c; }
.ctl-x { width: 12px; height: 12px; }
.ex-tabs { height: 29px; display: flex; justify-content: flex-end; align-items: center; gap: 9px; padding-right: 3px; border-bottom: 1px solid #d9dce0; }
.help { width: 20px; height: 20px; border-radius: 50%; background: #0a66c2; border: 1px solid #0b4f94; color: #fff; font-weight: 700; font-size: 13px; line-height: 18px; text-align: center; }
.ex-ribbon { height: 113px; background: #f4f6f8; border-bottom: 1px solid #d9dce0; }
.ex-search { height: 38px; margin: 5px 12px 8px 280px; border: 1px solid #d4d7da; color: #6f6f6f; font-size: 14.2px; letter-spacing: -.1px; line-height: 38px; display: flex; justify-content: flex-end; white-space: nowrap; }
.ex-body { flex: 1; display: flex; justify-content: flex-end; overflow: hidden; }
.ex-files { width: 392px; position: relative; overflow: hidden; }
.ex-files > * { position: absolute; }
.f-folder { left: 308px; top: 23px; }
.f-name { right: 33px; font-size: 14px; line-height: 20px; color: #111; letter-spacing: -.1px; }
.n1 { top: 132px; right: 32px; }
.n2 { top: 448px; }
.n3 { top: 636px; }
.f-doc { left: 263px; }
.d1 { top: 187px; }
.d2 { top: 335px; }
.f-brave { left: 252px; top: 514px; }
.d3 { top: 691px; }
.d4 { left: 114px; top: 691px; }
.ex-scroll { width: 20px; background: #f0f0f0; display: flex; flex-direction: column; align-items: center; justify-content: space-between; padding: 5px 0 5px; color: #505050; }
.ex-thumb { width: 19px; height: 428px; background: #cdcdcd; margin-bottom: 269px; }
.ex-foot { height: 30px; display: flex; justify-content: flex-end; align-items: center; gap: 5px; padding-right: 5px; }
.view-sel { width: 28px; height: 29px; background: #cce8f6; border: 1px solid #26a0da; display: flex; align-items: center; justify-content: center; }

/* Front notepad */
.np-front { left: 1300px; top: 17px; width: 520px; height: 947px; border: 1px solid #999; display: flex; flex-direction: column; }
.np-title { border-bottom: 2px solid #f0f0f0; padding: 13px 24px 0 0; display: flex; justify-content: flex-end; gap: 47px; color: #8c8c8c; height: 63px; flex: none; }
.np-main { flex: 1; display: flex; }
.np-text { flex: 1; padding: 23px 0 0 151px; font-family: "DejaVu Sans Mono", monospace; font-size: 16.600px; line-height: 22px; color: #111; }
.np-scroll { width: 19px; margin-right: 1px; background: #f0f0f0; display: flex; flex-direction: column; align-items: center; padding: 5px 0; color: #505050; }
.np-thumb { width: 19px; height: 52px; margin: 24px 0 auto; background: #cdcdcd; flex: none; }
.np-front .status { height: 29px; padding-left: 154px; flex: none; }
.np-front .c2 { width: 63px; padding-left: 9px; }
.np-front .c3 { width: 150px; }
.np-front .c2, .np-front .c3 { letter-spacing: 0; }

.sliver { position: absolute; left: 9px; top: 1px; width: 834px; height: 8px; background: #ecebec; }

/* Browser */
.browser { left: 8px; top: 6px; width: 1444px; height: 1017px; border: 1px solid #5c5f60; display: flex; flex-direction: column; box-shadow: 2px 2px 18px rgba(0,0,0,.42); background: #f2f2f2; }
.tabstrip { height: 47px; background: #d4d8db; display: flex; align-items: flex-end; padding-left: 6px; flex: none; }
.tab { width: 92.300px; height: 37px; display: flex; align-items: center; padding: 0 6px 0 10px; position: relative; font-size: 14.3px; color: #6b6e71; flex: none; }
.tab::after { content: ""; position: absolute; right: 0; top: 9px; bottom: 0; width: 1px; background: #b3b7ba; }
.tab.last::after, .tab.active::after { display: none; }
.fav { width: 20px; height: 20px; flex: none; }
.dim { color: #8b8b8b; }
.t { margin-left: 9px; flex: 1; overflow: hidden; white-space: nowrap; letter-spacing: -.25px; -webkit-mask-image: linear-gradient(90deg, #000 65%, transparent); mask-image: linear-gradient(90deg, #000 65%, transparent); line-height: 22px; }
.t.plain { -webkit-mask-image: none; mask-image: none; }
.snd { width: 14px; height: 14px; margin: 0 -1px 0 8px; color: #808386; }
.discord { position: relative; display: block; }
.discord i { position: absolute; inset: 0 0 4px 0; border-radius: 10px 10px 0 0; background: radial-gradient(circle at 7px 9px, #fff 2px, transparent 2.500px), radial-gradient(circle at 13px 9px, #fff 2px, transparent 2.500px), #5865f2; }
.discord b { position: absolute; left: 0; bottom: -1px; width: 20px; height: 12px; border-radius: 5px; background: #d80d0d; color: #fff; font-size: 9.500px; line-height: 12px; text-align: center; }
.dart { margin-left: 9px; }
.tab.active { background: #f2f2f2; border-radius: 5px 5px 0 0; color: #333; width: 93px; padding-left: 11px; }
.active .t { flex: none; width: 24px; }
.tx { margin-left: 7px; }
.plus { margin: 0 0 10px 16px; }
.winctl { margin-left: auto; padding: 0 22px 22px 0; display: flex; align-items: center; gap: 43.500px; color: #111; }

.toolbar { height: 47px; display: flex; align-items: center; flex: none; }
.nav-b { margin-left: 21px; }
.nav-f { margin-left: 28px; }
.nav-r { margin-left: 23px; }
.nav-m { margin-left: 150px; }
.urlbox { margin-left: 20px; width: 568px; height: 35px; border-radius: 4px; background: #fff; display: flex; align-items: center; padding: 0 12px 0 16px; }
.ulock { color: #5a5d60; }
.url { margin-left: 15px; width: 421px; font-size: 16.400px; color: #6f7275; white-space: nowrap; line-height: 24px; }
.url b { font-weight: 400; color: #222; }
.usep { width: 1px; height: 19px; background: #b9b9b9; margin: 0 14px 0 14px; }
.shield { position: relative; width: 19px; height: 22px; margin-right: 22px; }
.shield em { position: absolute; left: 15px; top: -3px; width: 15px; height: 15px; border-radius: 50%; background: #5f6275; color: #fff; font-size: 9px; line-height: 15px; text-align: center; }
.exts { display: flex; gap: 20.100px; margin-left: 92px; }
.exts svg { width: 20px; height: 20px; }
.exts svg:nth-last-child(2) { margin-left: 2px; }
.exts svg:last-child { margin-left: 2px; }

.bookmarks { height: 40px; display: flex; align-items: center; padding: 0 18px 7px; font-size: 14.150px; color: #333; border-bottom: 1px solid #d4d8db; flex: none; white-space: nowrap; }
.bm-text { width: 447px; }
.bm-link { margin-left: 6px; color: #fb542b; text-decoration: underline; text-underline-offset: 3px; }
.bm-sep { width: 1px; height: 20px; background: #b9b9b9; margin: 0 13px 0 auto; }
.bm-other { margin-left: 10px; width: 115px; }

.viewport { flex: 1; display: flex; overflow: hidden; }
.page { flex: 1; display: flex; flex-direction: column; justify-content: space-between; overflow: hidden; background: linear-gradient(90deg, #06101f, #02101f 10%, #02101f 90%, #020f1e); }
.page-end { height: 12px; background: #0a1124; }
.panel { margin-left: 130px; width: 1162px; height: 806px; background: #121d2a; border-radius: 0 0 12px 12px; padding: 0 37px; box-shadow: 0 0 40px rgba(4,14,40,.6); font-size: 15px; color: #7c83ad; display: flex; flex-direction: column; }
.panel a { color: #1492f8; }
.panel-tabs { margin: 0 -37px; height: 17px; border-bottom: 1px solid #3a4568; flex: none; }
.panel-tab { display: block; width: 161px; height: 15px; background: #1397fb; }
.tx-head { height: 105px; padding-top: 28px; display: flex; align-items: flex-start; flex: none; }
.tx-head h1 { font-size: 33.800px; font-weight: 400; -webkit-text-stroke: .6px #fff; line-height: 40px; color: #fff; margin-right: auto; }
.filter { margin: 9px 31px 0 0; width: 132px; height: 45px; border: 1px solid #12385a; border-radius: 3px; background: #13293e; font-size: 17.100px; letter-spacing: .35px; padding-left: 20px; display: flex; align-items: center; white-space: nowrap; }
.filter i { margin-left: 10px; border: 5px solid transparent; border-top-color: #8a90bb; border-bottom: 0; }
.pager { display: flex; gap: 6.500px; margin-top: 9px; height: 30px; }
.pg { border: 1px solid #12385a; border-radius: 3px; background: #13293e; display: flex; align-items: center; justify-content: center; width: 30px; }
.pg.cur { width: 70px; font-size: 14.800px; letter-spacing: .1px; }
.pg.off { border-color: #132c42; background: #122230; }

.card { height: 131px; margin-bottom: 20px; background: #142a3f; border-radius: 5px; display: flex; flex: none; }
.creation { height: 126px; }
.kind { width: 185px; border: 1px solid; border-left-width: 5px; border-radius: 5px 0 0 5px; display: flex; flex-direction: column; align-items: center; justify-content: center; line-height: 20.500px; font-size: 14.800px; letter-spacing: -.1px; padding-bottom: 2px; }
.kind b { font-size: 14.300px; letter-spacing: -.15px; }
.call .kind { color: #28a745; }
.creation .kind { color: #8f3dc8; }
.transfer .kind { color: #007bff; }
.info { padding: 20px 0 0 19px; flex: 1; white-space: nowrap; }
.info p { display: flex; align-items: center; height: 28px; letter-spacing: .3px; }
.info .route { letter-spacing: .22px; }
.info .l1 { align-items: flex-start; height: 32px; line-height: 28px; letter-spacing: .02px; }
.l1 .loose { letter-spacing: .11px; }
.l1 .looser { letter-spacing: .155px; }
.creation .l1 { height: 28px; }
.transfer .l1 { height: 33px; }
.info mark { margin: 1px 0 0 5px; padding: 0 6px; background: #1397fb; color: #fff; border-radius: 6px; height: 32px; line-height: 31px; font-size: 14.500px; font-weight: 500; letter-spacing: -.1px; }
.info mark.raw { letter-spacing: .35px; }
.arr { width: 22px; text-align: center; font-size: 18px; letter-spacing: 0; }
.info strong { font-weight: 400; -webkit-text-stroke: .3px #fff; font-size: 17.200px; color: #fff; margin-right: 5px; }
.meta { padding: 22px 23px 0 0; display: flex; flex-direction: column; align-items: flex-end; line-height: 28px; }
.meta a { letter-spacing: .12px; }
.creation .meta { padding-top: 20px; }
.transfer .meta { padding-top: 23px; }
.meta em { height: 24px; line-height: 24px; margin-top: 4px; padding: 0 13.500px; border-radius: 5px; font-size: 12.500px; font-weight: 700; }
.out { background: #2a3541; color: #f58f60; }
.in { background: #123a48; color: #10b597; }
.tx-foot { display: flex; align-items: center; margin-top: 17px; }
.dl { color: #a0a4a9; width: 114px; margin: 4px 4px 0 0; font-size: 15.900px; }
.dl a { letter-spacing: .5px; }
.csv { margin-top: -1px; }
.tx-foot .pager { margin: 0 0 0 auto; }

.vscroll { width: 20px; background: #f1f1f1; display: flex; flex-direction: column; align-items: center; padding: 9px 0 10px; flex: none; }
.tri-up { border: 5px solid transparent; border-bottom-color: #505050; border-top: 0; }
.tri-down { border: 5px solid transparent; border-top-color: #505050; border-bottom: 0; margin-top: auto; }
.vthumb { width: 17px; height: 359px; background: #c1c1c1; margin-top: 313px; }

/* Taskbar */
.taskbar { position: absolute; left: 0; top: 1030px; width: 1920px; height: 50px; display: flex; background: linear-gradient(90deg, #2a2b2c 0 60px, #3a3a37 490px, #2a2928 800px, #292826 1100px, #2f2e2d 1400px, #3a3935 1700px, #2c2b2a); color: #fff; }
.start { width: 60px; display: flex; align-items: center; justify-content: center; }
.search { width: 430px; margin: 1px 0; background: #f1f1f1; border: 1px solid #c4c4c4; display: flex; align-items: center; padding-left: 14px; color: #2e2e2e; font-size: 16.600px; }
.search span { margin-left: 14px; }
.apps { display: flex; }
.app { width: 60px; margin-right: 1.900px; display: flex; align-items: center; justify-content: center; position: relative; }
.app.run::after { content: ""; position: absolute; left: 5px; width: 51px; bottom: 0; height: 3px; background: #76b9ed; }
.app.more::after { background: linear-gradient(90deg, #76b9ed 40px, #5b8db4 40px); }
.app.act { background: linear-gradient(90deg, #575654 56px, #474644 56px); width: 61px; margin-right: .900px; padding-right: 1px; }
.app.act::after { content: ""; position: absolute; left: 0; width: 56px; bottom: 0; height: 3px; background: #76b9ed; }
.tray { margin-left: auto; display: flex; align-items: center; gap: 11px; }
.tray svg:nth-child(2) { margin-left: 2px; }
.tray svg:nth-child(3) { margin-left: 4px; }
.clock { width: 75px; margin-left: 9px; display: flex; flex-direction: column; align-items: center; font-size: 14.200px; line-height: 22px; padding-top: 3px; letter-spacing: -.2px; }
.notif { position: relative; width: 45px; margin-left: 19px; margin-right: 6px; padding: 15px 0 0; border-right: 1px solid #77756f; }
.notif span { position: absolute; left: 9px; top: 23px; width: 22px; height: 22px; border-radius: 50%; border: 1px solid #8a8a88; background: #34332fcc; font-size: 14px; font-weight: 600; line-height: 20px; text-align: center; letter-spacing: -.3px; }
```
